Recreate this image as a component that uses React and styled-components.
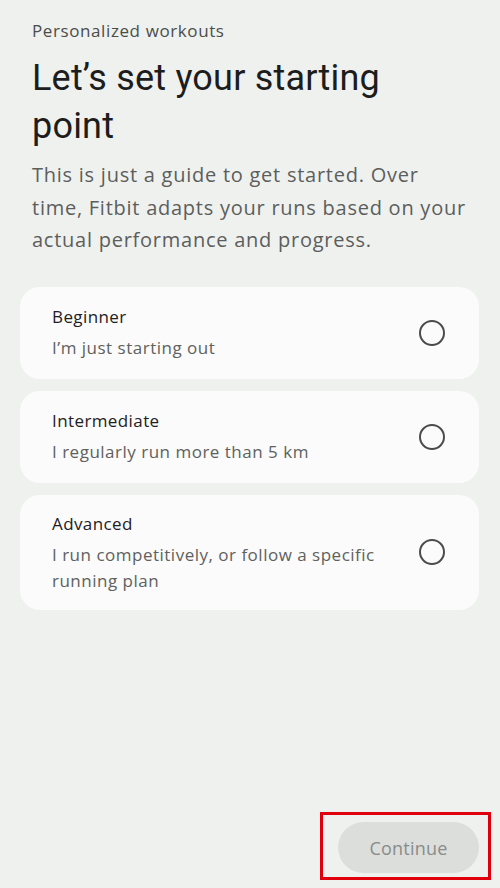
import React from 'react'
import styled, { createGlobalStyle } from 'styled-components'

const GlobalStyle = createGlobalStyle`
  html, body {
    margin: 0;
    padding: 0;
    background: #eff1ef;
  }
  body {
    font-family: 'Open Sans', 'Roboto', sans-serif;
    -webkit-font-smoothing: antialiased;
  }
`

const Screen = styled.div`
  width: 500px;
  height: 888px;
  box-sizing: border-box;
  display: flex;
  flex-direction: column;
  background: #eff1ef;
  overflow: hidden;
`

const Header = styled.div`
  padding: 19px 32px 0;
`

const Eyebrow = styled.div`
  font-size: 17px;
  line-height: 24px;
  letter-spacing: 0.6px;
  color: #4b4d4b;
`

const Title = styled.h1`
  margin: 11px 0 0;
  font-family: 'Roboto', sans-serif;
  font-weight: 400;
  font-size: 36px;
  line-height: 48px;
  letter-spacing: 0.2px;
  color: #1c1d1c;
`

const Lead = styled.p`
  margin: 9px 0 0;
  font-size: 20px;
  line-height: 32.5px;
  letter-spacing: 0.75px;
  color: #5c5e5c;
`

const Options = styled.div`
  display: flex;
  flex-direction: column;
  gap: 12px;
  padding: 0 21px 0 20px;
  margin-top: 30px;
`

const Card = styled.label`
  display: flex;
  align-items: center;
  justify-content: space-between;
  gap: 24px;
  min-height: 92px;
  box-sizing: border-box;
  padding: 16px 34px 16px 32px;
  background: #fafbfa;
  border-radius: 20px;
  cursor: pointer;
`

const CardText = styled.div`
  display: flex;
  flex-direction: column;
  gap: 5px;
`

const CardTitle = styled.div`
  font-size: 17px;
  line-height: 26px;
  letter-spacing: 0.4px;
  color: #1f201f;
`

const CardSub = styled.div`
  font-size: 17px;
  line-height: 26px;
  letter-spacing: 0.5px;
  color: #5f615f;
`

const Radio = styled.span`
  flex: none;
  width: 22px;
  height: 22px;
  border: 2px solid #4a4c4a;
  border-radius: 50%;
`

const Footer = styled.div`
  margin-top: auto;
  display: flex;
  justify-content: flex-end;
  padding: 0 9px 8px 0;
`

const Highlight = styled.div`
  border: 3px solid #e0000d;
  padding: 7px 9px 4px 15px;
`

const ContinueButton = styled.button`
  width: 141px;
  height: 51px;
  border: none;
  border-radius: 26px;
  background: #dcdedc;
  color: #8a8c8a;
  font-family: 'Open Sans', 'Roboto', sans-serif;
  font-size: 18px;
  letter-spacing: 0.2px;
`

const options = [
  { title: 'Beginner', sub: 'I’m just starting out' },
  { title: 'Intermediate', sub: 'I regularly run more than 5 km' },
  { title: 'Advanced', sub: 'I run competitively, or follow a specific running plan' },
]

export default function App() {
  return (
    <>
      <GlobalStyle />
      <Screen>
        <Header>
          <Eyebrow>Personalized workouts</Eyebrow>
          <Title>Let’s set your starting point</Title>
          <Lead>
            This is just a guide to get started. Over time, Fitbit adapts your runs based on your
            actual performance and progress.
          </Lead>
        </Header>
        <Options>
          {options.map(o => (
            <Card key={o.title}>
              <CardText>
                <CardTitle>{o.title}</CardTitle>
                <CardSub>{o.sub}</CardSub>
              </CardText>
              <Radio />
            </Card>
          ))}
        </Options>
        <Footer>
          <Highlight>
            <ContinueButton disabled>Continue</ContinueButton>
          </Highlight>
        </Footer>
      </Screen>
    </>
  )
}
